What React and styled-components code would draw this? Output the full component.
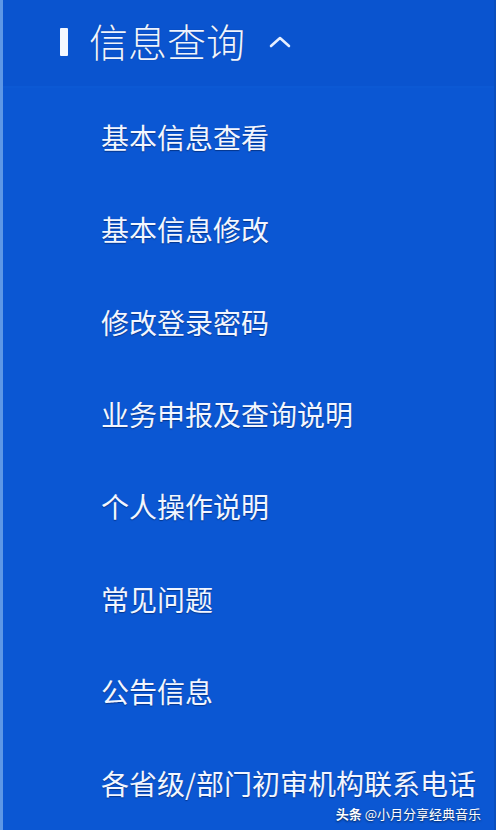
import React from 'react';
import styled, { createGlobalStyle } from 'styled-components';

const GlobalStyle = createGlobalStyle`
  html, body {
    margin: 0;
    padding: 0;
    background: #0b56d2;
  }
  body {
    font-family: "Noto Sans CJK SC", "Noto Sans", sans-serif;
  }
`

const Panel = styled('div')`
  position: relative;
  width: 496px;
  height: 830px;
  box-sizing: border-box;
  background: #0b57d3;
  border-left: 3px solid #5d97e6;
  border-right: 2px solid #0a4fbf;
  overflow: hidden;
`

const Header = styled('div')`
  display: flex;
  align-items: center;
  height: 88px;
  padding-left: 57px;
  box-sizing: border-box;
  background: #0a54cf;
  border-bottom: 2px solid #0c59d4;
  color: #eef4ff;
`

const Marker = styled('span')`
  width: 8px;
  height: 28px;
  border-radius: 1px;
  background: #f4f8ff;
  margin-right: 21px;
  margin-top: -3px;
`

const Title = styled('h2')`
  margin: 0;
  font-size: 39px;
  font-weight: 300;
  letter-spacing: 0;
  line-height: 1;
  margin-top: -6px;
  text-shadow: 0 0 1px rgba(0, 30, 90, 0.6);
`

const Chevron = styled('svg')`
  margin-left: 24px;
  margin-top: -2px;
`

const Menu = styled('ul')`
  list-style: none;
  margin: 0;
  padding: 3px 0 0;
`

const Item = styled('li')`
  display: flex;
  align-items: center;
  height: 92.3px;
  padding-left: 98px;
  color: #f2f6ff;
  font-size: 28px;
  font-weight: 400;
  white-space: nowrap;
  letter-spacing: 0;
  text-shadow: 0 1px 1px rgba(0, 25, 80, 0.55);
`

const Watermark = styled('div')`
  position: absolute;
  right: 13px;
  bottom: 7px;
  font-size: 13px;
  color: #ffffff;
  text-shadow: 0 1px 2px rgba(0, 0, 0, 0.6);

  b {
    font-weight: 700;
    margin-right: 3px;
  }
`

const items = [
  '基本信息查看',
  '基本信息修改',
  '修改登录密码',
  '业务申报及查询说明',
  '个人操作说明',
  '常见问题',
  '公告信息',
  '各省级/部门初审机构联系电话',
]

export default function App() {
  return (
    <>
      <GlobalStyle />
      <Panel>
        <Header>
          <Marker />
          <Title>信息查询</Title>
          <Chevron width="22" height="12" viewBox="0 0 22 12">
            <path d="M2 10 L11 2 L20 10" fill="none" stroke="#e6efff" strokeWidth="2.6" strokeLinecap="round" strokeLinejoin="round" />
          </Chevron>
        </Header>
        <Menu>
          {items.map((label) => (
            <Item key={label}>{label}</Item>
          ))}
        </Menu>
        <Watermark><b>头条</b>@小月分享经典音乐</Watermark>
      </Panel>
    </>
  );
}
